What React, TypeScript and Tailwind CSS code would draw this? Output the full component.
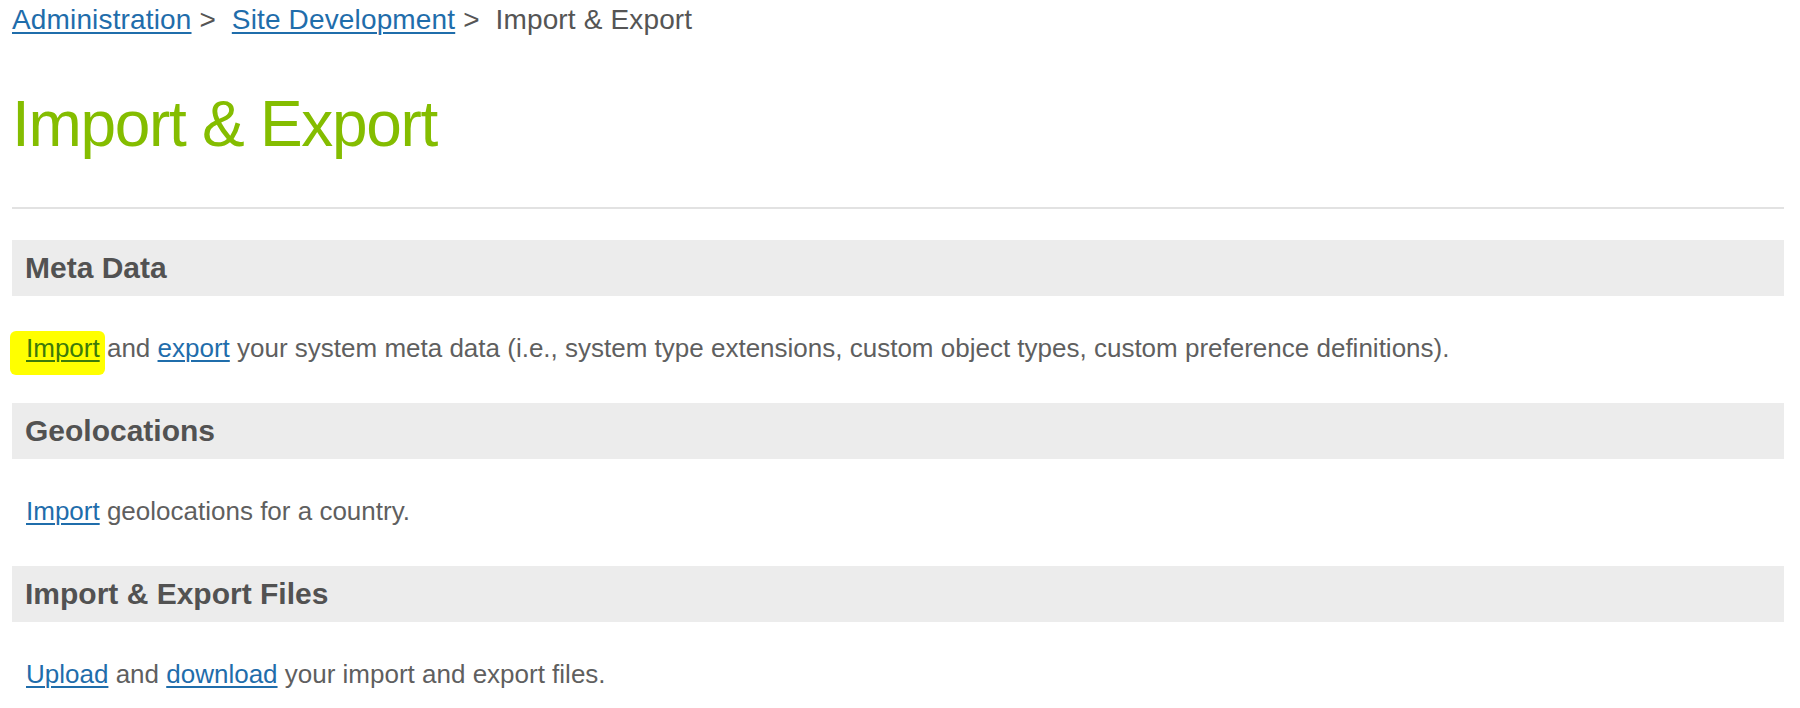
import React from "react";

const linkCls = "text-[#1f6dab] underline underline-offset-[3px] decoration-[1.5px]";

function Section({ title, children }: { title: string; children: React.ReactNode }) {
  return (
    <div>
      <div className="h-[56px] bg-[#ececec] pl-[13px] text-[30px] leading-[56px] font-bold text-[#525252]">
        {title}
      </div>
      <div className="mt-[32px] mb-[35px] pl-[14px] text-[26px] leading-[40px] text-[#5f5f5f]">
        {children}
      </div>
    </div>
  );
}

export default function App() {
  return (
    <div className="w-[1800px] h-[708px] overflow-hidden bg-white font-['Liberation_Sans',Arial,sans-serif]">
      <div className="pl-[12px] pr-[16px]">
        <div className="pt-[4px] text-[28px] leading-[32px] tracking-[0.15px] text-[#555]">
          <a className={linkCls} href="#">Administration</a>
          <span> &gt; &nbsp;</span>
          <a className={linkCls} href="#">Site Development</a>
          <span> &gt; &nbsp;</span>
          <span>Import &amp; Export</span>
        </div>
        <h1 className="mt-[52px] text-[64px] leading-[72px] tracking-[-1.3px] text-[#84bd00]">
          Import &amp; Export
        </h1>
        <div className="mt-[47px] h-[2px] bg-[#e2e2e2]" />
        <div className="mt-[31px]">
          <Section title="Meta Data">
            <span className="-ml-[16px] pl-[16px] pr-[5px] -mr-[5px] pt-[2px] pb-[12px] bg-[#ffff00] rounded-[6px]">
              <a className="text-[#3d7a0a] underline underline-offset-[3px] decoration-[1.5px]" href="#">Import</a>
            </span>{" "}
            and <a className={linkCls} href="#">export</a> your system meta data (i.e., system type extensions, custom object types, custom preference definitions).
          </Section>
          <Section title="Geolocations">
            <a className={linkCls} href="#">Import</a> geolocations for a country.
          </Section>
          <Section title="Import &amp; Export Files">
            <a className={linkCls} href="#">Upload</a> and <a className={linkCls} href="#">download</a> your import and export files.
          </Section>
        </div>
      </div>
    </div>
  );
}
